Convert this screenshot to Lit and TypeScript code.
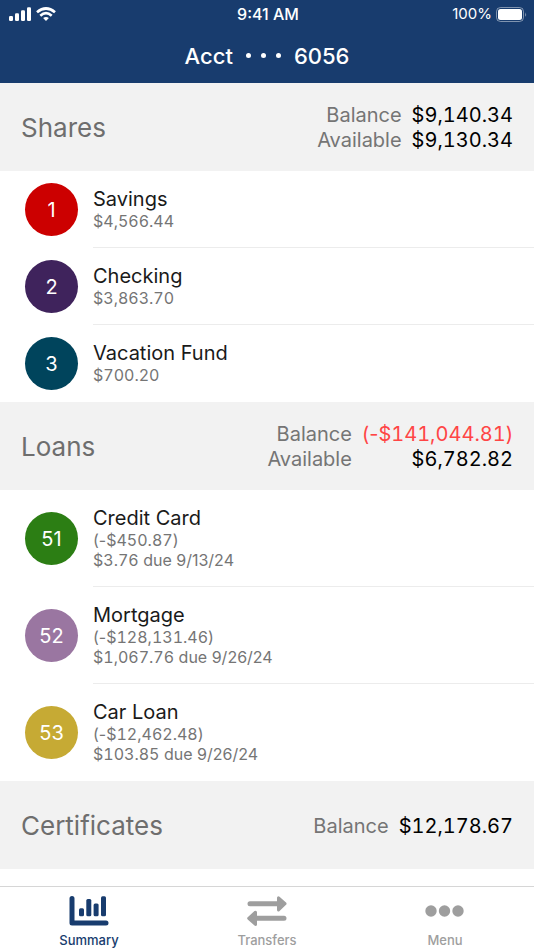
import { LitElement, html, css, svg, nothing } from "lit";
import { customElement, property, state } from "lit/decorators.js";
import { classMap } from "lit/directives/class-map.js";

interface Account {
  id: number;
  name: string;
  lines: string[];
  color: string;
}

interface Total {
  label: string;
  value: string;
}

interface Group {
  title: string;
  totals: Total[];
  accounts: Account[];
}

const GROUPS: Group[] = [
  {
    title: "Shares",
    totals: [
      { label: "Balance", value: "$9,140.34" },
      { label: "Available", value: "$9,130.34" },
    ],
    accounts: [
      { id: 1, name: "Savings", lines: ["$4,566.44"], color: "#cc0000" },
      { id: 2, name: "Checking", lines: ["$3,863.70"], color: "#3f235c" },
      { id: 3, name: "Vacation Fund", lines: ["$700.20"], color: "#00445c" },
    ],
  },
  {
    title: "Loans",
    totals: [
      { label: "Balance", value: "(-$141,044.81)" },
      { label: "Available", value: "$6,782.82" },
    ],
    accounts: [
      { id: 51, name: "Credit Card", lines: ["(-$450.87)", "$3.76 due 9/13/24"], color: "#2c7e14" },
      { id: 52, name: "Mortgage", lines: ["(-$128,131.46)", "$1,067.76 due 9/26/24"], color: "#9a76a1" },
      { id: 53, name: "Car Loan", lines: ["(-$12,462.48)", "$103.85 due 9/26/24"], color: "#c6aa34" },
    ],
  },
  {
    title: "Certificates",
    totals: [{ label: "Balance", value: "$12,178.67" }],
    accounts: [],
  },
];

const isNegative = (amount: string) => amount.startsWith("(");

/** Sets dollar amounts in tabular figures and leaves the rest of the text proportional. */
const money = (text: string) =>
  text
    .split(/(\$[\d,.]+)/)
    .filter(Boolean)
    .map((part) => (part.startsWith("$") ? html`<span class="figures">${part}</span>` : part));

const TABS = [
  {
    label: "Summary",
    icon: svg`
      <path d="M3 2.500v24.500h34" fill="none" stroke="currentColor" stroke-width="5" stroke-linecap="round" stroke-linejoin="round"/>
      <g fill="currentColor">
        <rect x="10" y="12.300" width="5" height="7.900" rx="1.500"/>
        <rect x="17.300" y="3" width="5" height="17.200" rx="1.500"/>
        <rect x="24.600" y="7.500" width="5" height="12.700" rx="1.500"/>
        <rect x="32" y="0.300" width="5" height="19.900" rx="1.500"/>
      </g>`,
  },
  {
    label: "Transfers",
    icon: svg`
      <path d="M3 7.700h30M7 22.300h30" fill="none" stroke="currentColor" stroke-width="5" stroke-linecap="round"/>
      <path d="M31.500 1.800l6.500 5.900-6.500 6.200zM8.500 16.200l-6.800 6.100 6.800 6.100z" fill="currentColor" stroke="currentColor" stroke-width="3" stroke-linejoin="round"/>`,
  },
  {
    label: "Menu",
    icon: svg`
      <circle cx="6" cy="15" r="5.700" fill="currentColor"/>
      <circle cx="19.500" cy="15" r="5.700" fill="currentColor"/>
      <circle cx="33" cy="15" r="5.700" fill="currentColor"/>`,
  },
];

@customElement("status-bar")
class StatusBar extends LitElement {
  static styles = css`
    :host {
      display: grid;
      grid-template-columns: 1fr auto 1fr;
      align-items: center;
      height: 28px;
      padding: 0 7px 0 9px;
      font-size: 15px;
      line-height: 20px;
      color: #fff;
    }
    .signals,
    .power {
      display: flex;
      align-items: center;
      gap: 5px;
    }
    .power {
      justify-content: flex-end;
      gap: 4px;
    }
    .time {
      font-size: 16px;
      font-weight: 500;
    }
    svg {
      display: block;
    }
  `;

  render() {
    return html`
      <div class="signals">
        <svg width="22" height="14" viewBox="0 0 22 14" fill="currentColor" aria-label="Cellular signal">
          <rect x="0" y="9" width="4" height="5" rx="1.200" />
          <rect x="6" y="6.300" width="4" height="7.700" rx="1.200" />
          <rect x="12" y="3.300" width="4" height="10.700" rx="1.200" />
          <rect x="18" y="0.200" width="4" height="13.800" rx="1.200" />
        </svg>
        <svg width="20" height="14" viewBox="0 0 20 14" fill="none" stroke="currentColor" stroke-width="2.700" aria-label="Wi-Fi">
          <path d="M1 5.300Q10-2.300 19 5.300" />
          <path d="M4.300 8.700Q10 3.700 15.700 8.700" />
          <path d="M10 14l-2.900-2.900q2.900-2.400 5.800 0z" fill="currentColor" stroke="none" />
        </svg>
      </div>
      <div class="time">9:41 AM</div>
      <div class="power">
        <span>100%</span>
        <svg width="31" height="15" viewBox="0 0 31 15" aria-label="Battery full">
          <rect x="0.500" y="0.500" width="27" height="14" rx="4" fill="none" stroke="#fff" stroke-opacity="0.450" />
          <rect x="2" y="2" width="24" height="11" rx="2.500" fill="#fff" />
          <path d="M29.200 5.200q1.800 2.300 0 4.600z" fill="#fff" fill-opacity="0.500" />
        </svg>
      </div>
    `;
  }
}

@customElement("account-group")
class AccountGroup extends LitElement {
  @property({ attribute: false }) group!: Group;

  static styles = css`
    :host {
      display: block;
    }
    .head {
      display: flex;
      align-items: center;
      justify-content: space-between;
      box-sizing: border-box;
      min-height: 88px;
      padding: 20px 21px 18px;
      background: #f2f2f2;
    }
    .title {
      margin: 0;
      font-size: 26px;
      line-height: 32px;
      font-weight: 400;
      color: #6e6e6e;
    }
    .totals {
      display: grid;
      grid-template-columns: auto auto;
      column-gap: 10px;
      margin: 0;
      font-size: 20px;
      line-height: 25px;
      text-align: right;
    }
    .label {
      color: #757575;
    }
    .value {
      margin: 0;
      color: #000;
    }
    .negative {
      color: #ff4545;
    }
    .figures {
      font-variant-numeric: tabular-nums;
    }
    .list {
      margin: 0;
      padding: 0;
      list-style: none;
    }
    .row {
      display: flex;
      align-items: stretch;
      gap: 15px;
      width: 100%;
      padding: 0 0 0 25px;
      border: 0;
      background: none;
      font: inherit;
      text-align: left;
      cursor: pointer;
    }
    .badge {
      display: flex;
      align-items: center;
      justify-content: center;
      align-self: center;
      flex: none;
      width: 53px;
      height: 53px;
      border-radius: 50%;
      font-size: 20px;
      color: #fff;
    }
    .info {
      display: flex;
      flex-direction: column;
      flex: 1;
      padding: 16px 21px 16px 0;
      border-bottom: 1px solid #ececec;
    }
    .item:last-child .info {
      border-bottom-color: transparent;
    }
    .name {
      font-size: 20px;
      line-height: 24px;
      color: #1a1a1a;
    }
    .line {
      font-size: 16px;
      line-height: 20px;
      color: #757575;
    }
  `;

  render() {
    const { title, totals, accounts } = this.group;
    return html`
      <section>
        <header class="head">
          <h2 class="title">${title}</h2>
          <dl class="totals">
            ${totals.map(
              (t) => html`
                <dt class="label">${t.label}</dt>
                <dd class=${classMap({ value: true, negative: isNegative(t.value) })}>${money(t.value)}</dd>
              `
            )}
          </dl>
        </header>
        ${accounts.length
          ? html`<ul class="list">
              ${accounts.map(
                (a) => html`
                  <li class="item">
                    <button class="row" type="button">
                      <span class="badge" style="background:${a.color}">${a.id}</span>
                      <span class="info">
                        <span class="name">${a.name}</span>
                        ${a.lines.map((l) => html`<span class="line">${money(l)}</span>`)}
                      </span>
                    </button>
                  </li>
                `
              )}
            </ul>`
          : nothing}
      </section>
    `;
  }
}

@customElement("app-root")
class AppRoot extends LitElement {
  @state() private active = "Summary";

  static styles = css`
    :host {
      display: flex;
      flex-direction: column;
      height: 100vh;
      background: #fff;
      font-family: Inter, "Liberation Sans", sans-serif;
    }
    .top {
      flex: none;
      background: #183c6e;
      color: #fff;
    }
    .account {
      display: flex;
      align-items: center;
      justify-content: center;
      gap: 13px;
      height: 55px;
      margin: 0;
      font-size: 22px;
      line-height: 28px;
      font-weight: 500;
    }
    .dots {
      display: flex;
      gap: 10px;
    }
    .dot {
      width: 5px;
      height: 5px;
      border-radius: 50%;
      background: #fff;
    }
    .content {
      flex: 1;
      min-height: 0;
      overflow-y: auto;
    }
    .tabs {
      display: grid;
      grid-template-columns: repeat(3, 1fr);
      flex: none;
      border-top: 1px solid #d6d6d6;
      background: #fff;
    }
    .tab {
      display: flex;
      flex-direction: column;
      align-items: center;
      gap: 6px;
      padding: 9px 0 2px;
      border: 0;
      background: none;
      font: inherit;
      font-size: 13px;
      line-height: 16px;
      font-weight: 500;
      color: #9e9e9e;
      cursor: pointer;
    }
    .selected {
      color: #183c6e;
    }
    .icon {
      display: block;
    }
  `;

  render() {
    return html`
      <header class="top">
        <status-bar></status-bar>
        <h1 class="account">
          <span>Acct</span>
          <span class="dots"><i class="dot"></i><i class="dot"></i><i class="dot"></i></span>
          <span>6056</span>
        </h1>
      </header>
      <main class="content">
        ${GROUPS.map((g) => html`<account-group .group=${g}></account-group>`)}
      </main>
      <nav class="tabs">
        ${TABS.map(
          (t) => html`
            <button
              type="button"
              class=${classMap({ tab: true, selected: t.label === this.active })}
              @click=${() => (this.active = t.label)}
            >
              <svg class="icon" width="40" height="30" viewBox="0 0 40 30" aria-hidden="true">${t.icon}</svg>
              <span>${t.label}</span>
            </button>
          `
        )}
      </nav>
    `;
  }
}
